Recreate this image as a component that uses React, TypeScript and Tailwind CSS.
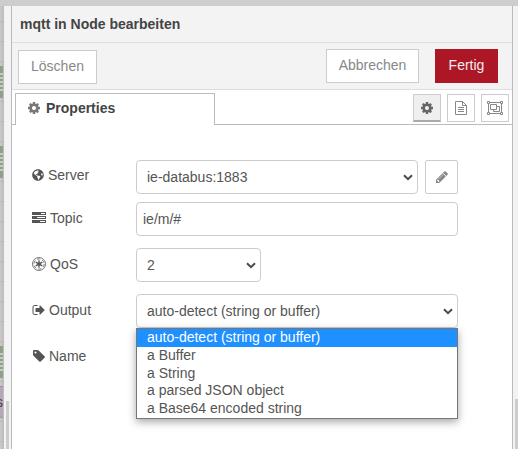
import React from "react";
import { FaGlobeAmericas } from "react-icons/fa";

type IconProps = { className?: string };

const glyphs = {
  cog: "M1152 896q0-106-75-181t-181-75-181 75-75 181 75 181 181 75 181-75 75-181zm512-109v222q0 12-8 23t-20 13l-185 28q-19 54-39 91 35 50 107 138 10 12 10 25t-9 23q-27 37-99 108t-94 71q-12 0-26-9l-138-108q-44 23-91 38-16 136-29 186-7 28-36 28h-222q-14 0-24.5-8.5t-11.5-21.5l-28-184q-49-16-90-37l-141 107q-10 9-25 9-14 0-25-11-126-114-165-168-7-10-7-23 0-12 8-23 15-21 51-66.5t54-70.5q-27-50-41-99l-183-27q-13-2-21-12.5t-8-23.5v-222q0-12 8-23t19-13l186-28q14-46 39-92-40-57-107-138-10-12-10-24 0-10 9-23 26-36 98.5-107.5t94.5-71.5q13 0 26 10l138 107q44-23 91-38 16-136 29-186 7-28 36-28h222q14 0 24.5 8.5t11.5 21.5l28 184q49 16 90 37l142-107q9-9 24-9 13 0 25 10 129 119 165 170 7 8 7 22 0 12-8 23-15 21-51 66.5t-54 70.5q26 50 41 98l183 28q13 2 21 12.5t8 23.5z",
  tag: "M576 448q0-53-37.5-90.5t-90.5-37.5-90.5 37.5-37.5 90.5 37.5 90.5 90.5 37.5 90.5-37.5 37.5-90.5zm1067 576q0 53-37 90l-491 492q-39 37-91 37-53 0-90-37l-715-716q-38-37-64.5-101t-26.5-117v-416q0-52 38-90t90-38h416q53 0 117 26.5t102 64.5l715 714q37 39 37 91z",
  signOut: "M704 1440q0 4 1 20t.5 26.5-3 23.5-10 19.5-20.5 6.5h-320q-119 0-203.5-84.5t-84.5-203.5v-704q0-119 84.5-203.5t203.5-84.5h320q13 0 22.5 9.5t9.5 22.5q0 4 1 20t.5 26.5-3 23.5-10 19.5-20.5 6.5h-320q-66 0-113 47t-47 113v704q0 66 47 113t113 47h312l11.5 1 11.5 3 8 5.5 7 9 2 13.5zm928-544q0 26-19 45l-544 544q-19 19-45 19t-45-19-19-45v-288h-448q-26 0-45-19t-19-45v-384q0-26 19-45t45-19h448v-288q0-26 19-45t45-19 45 19 19 45l544 544q19 19 19 45z",
  pencil: "M491 1536l91-91-235-235-91 91v107h128v128h107zm523-928q0-22-22-22-10 0-17 7l-542 542q-7 7-7 17 0 22 22 22 10 0 17-7l542-542q7-7 7-17zm-54-192l416 416-832 832h-416v-416zm683 96q0 53-37 90l-166 166-416-416 166-165q36-38 90-38 53 0 91 38l235 234q37 39 37 91z",
};

function Glyph({ name, className }: IconProps & { name: keyof typeof glyphs }) {
  return (
    <svg viewBox="0 0 1792 1792" fill="currentColor" className={className}>
      <path d={glyphs[name]} />
    </svg>
  );
}

function FileIcon({ className }: IconProps) {
  return (
    <svg viewBox="0 0 12 14" fill="none" stroke="currentColor" className={className}>
      <path d="M.5 .5H7.5L11.5 4.5V13.5H.5ZM7.5 .5V4.5H11.5M3 6.5H9M3 8.5H9M3 10.5H9" />
    </svg>
  );
}

function TasksIcon({ className }: IconProps) {
  return (
    <svg viewBox="0 0 14 12" className={className}>
      <path
        fill="currentColor"
        fillRule="evenodd"
        d="M0 0H14V3H0ZM9 1V2H13V1ZM0 4H14V7H0ZM5 5V6H13V5ZM0 8H14V11H0ZM8 9V10H13V9Z"
      />
    </svg>
  );
}

function EmpireIcon({ className }: IconProps) {
  return (
    <svg viewBox="0 0 14 14" fill="none" stroke="currentColor" className={className}>
      <circle cx="7" cy="7" r="6.5" strokeWidth=".8" />
      <circle cx="7" cy="7" r="5.1" strokeWidth="1" strokeDasharray="3.34 2" opacity=".75" />
      <path d="M7 3.2V10.8M3.7 5.1L10.3 8.9M3.7 8.9L10.3 5.1" strokeWidth="1.3" />
      <circle cx="7" cy="7" r="1.5" fill="currentColor" stroke="none" />
    </svg>
  );
}

function ObjectGroupIcon({ className }: IconProps) {
  return (
    <svg viewBox="0 0 16 14" fill="none" stroke="currentColor" className={className}>
      <path d="M3 1.5H13M3 12.5H13M1.5 3V11M14.5 3V11" />
      <path d="M.5 .5H2.5V2.5H.5ZM13.5 .5H15.5V2.5H13.5ZM.5 11.5H2.5V13.5H.5ZM13.5 11.5H15.5V13.5H13.5Z" />
      <path d="M3.5 3.5H9.5V8.5H3.5ZM9.5 5.5H12.5V10.5H6.5V8.5" />
    </svg>
  );
}

function Chevron() {
  return (
    <svg viewBox="0 0 10 7" fill="none" stroke="#4a4a4a" strokeWidth="2" className="h-[7px] w-[10px]">
      <path d="M1 1.2L5 5.2L9 1.2" />
    </svg>
  );
}

function SelectBox({ children, className }: { children: React.ReactNode; className: string }) {
  return (
    <div className={`flex h-[34px] items-center justify-between rounded-[4px] border border-[#ccc] bg-white pr-[4px] pl-[10px] ${className}`}>
      <span>{children}</span>
      <Chevron />
    </div>
  );
}

function Row({ icon, label, children, className = "", labelClass = "pb-[3px]" }: { icon: React.ReactNode; label: string; children?: React.ReactNode; className?: string; labelClass?: string }) {
  return (
    <div className={`flex h-[34px] ${className}`}>
      <div className={`flex w-[104px] items-center ${labelClass}`}>
        {icon}
        <span>{label}</span>
      </div>
      {children}
    </div>
  );
}

function CanvasNode() {
  return (
    <div className="flex h-[32px] w-[3px] flex-col justify-between bg-[#c4cbc1]">
      <i className="h-[7px] bg-[#8ea087]" />
      <i className="h-[2px] bg-[#8ea087]" />
      <i className="h-[2px] bg-[#8ea087]" />
      <i className="h-[2px] bg-[#8ea087]" />
      <i className="h-[2px] bg-[#8ea087]" />
      <i className="h-[7px] bg-[#8ea087]" />
    </div>
  );
}

const options = ["auto-detect (string or buffer)", "a Buffer", "a String", "a parsed JSON object", "a Base64 encoded string"];

export default function App() {
  return (
    <div className="flex h-[449px] w-[518px] flex-col overflow-hidden bg-[#cdcdcd] pt-[6px] font-['Liberation_Sans',Arial,sans-serif] text-[14px] leading-[20px] text-[#555]">
      <div className="flex flex-1">
        <div className="w-[4px] overflow-hidden bg-[repeating-linear-gradient(to_bottom,transparent_0px,transparent_15px,#b9b9b9_15px,#b9b9b9_16px,transparent_16px,transparent_20px),linear-gradient(to_right,#cbcac9,#bcbbba)]">
          <div className="h-[60px]" />
          <CanvasNode />
          <div className="h-[48px]" />
          <CanvasNode />
          <div className="h-[168px]" />
          <CanvasNode />
          <div className="mt-[8px] flex h-[32px] w-[3px] items-center justify-end border-y border-[#999] bg-[#b5a7b5] text-[#444]">s</div>
        </div>
        <div className="flex w-[7px] justify-center bg-[#f3f3f3] pt-[395px]">
          <div className="h-[50px] w-[3px] bg-[#cdcdcd]" />
        </div>
        <div className="w-[502px] border-x border-[#bbb] bg-white">
          <div className="flex h-[37px] items-center border-b border-[#ddd] bg-[#f3f3f3] pl-[8px] font-bold text-[#444]">mqtt in Node bearbeiten</div>
          <div className="flex h-[47px] items-start border-b border-[#ddd] bg-[#f3f3f3] pt-[6px] pr-[14px] pl-[6px] text-[#888]">
            <button className="mt-[1px] h-[34px] w-[79px] border border-[#ccc] bg-white pb-[2px]">Löschen</button>
            <button className="ml-auto h-[34px] w-[93px] border border-[#ccc] bg-white pb-[2px]">Abbrechen</button>
            <button className="ml-[16px] h-[34px] w-[63px] bg-[#ad1625] pb-[2px] text-[#eee]">Fertig</button>
          </div>
          <div className="flex h-[35px] items-end">
            <div className="h-px w-[3px] bg-[#bbb]" />
            <div className="flex h-[32px] w-[200px] items-center border border-b-0 border-[#bbb] pb-[3px] pl-[11px] font-bold text-[#444]">
              <Glyph name="cog" className="mr-[5px] h-[14px] w-[14px] text-[#777]" />
              Properties
            </div>
            <div className="flex h-[35px] flex-1 justify-end gap-[6px] border-b border-[#bbb] pt-[4px] pr-[3px] text-[#888]">
              <div className="flex h-[28px] w-[28px] items-center justify-center border border-b-2 border-[#ccc] border-b-[#aaa] bg-[#efefef] text-[#666]">
                <Glyph name="cog" className="h-[14px] w-[14px]" />
              </div>
              <div className="flex h-[28px] w-[28px] items-center justify-center border border-[#ccc]">
                <FileIcon className="h-[14px] w-[12px]" />
              </div>
              <div className="flex h-[28px] w-[28px] items-center justify-center border border-[#ccc]">
                <ObjectGroupIcon className="h-[14px] w-[16px]" />
              </div>
            </div>
          </div>
          <div className="flex flex-col pt-[35px] pl-[20px]">
            <Row label="Server" labelClass="pb-[4px]" icon={<FaGlobeAmericas className="mr-[4px] h-[12px] w-[12px]" />}>
              <SelectBox className="w-[282px]">ie-databus:1883</SelectBox>
              <button className="ml-[7px] flex h-[34px] w-[33px] items-center justify-center rounded-[2px] border border-[#ccc] pb-px text-[#888]">
                <Glyph name="pencil" className="h-[14px] w-[14px]" />
              </button>
            </Row>
            <Row className="mt-[8px]" label="Topic" icon={<TasksIcon className="mt-px mr-[4px] h-[12px] w-[14px]" />}>
              <div className="flex h-[34px] w-[322px] items-center rounded-[4px] border border-[#ccc] pl-[6px]">ie/m/#</div>
            </Row>
            <Row className="mt-[12px]" label="QoS" icon={<EmpireIcon className="mr-[4px] h-[14px] w-[14px]" />}>
              <SelectBox className="w-[125px]">2</SelectBox>
            </Row>
            <Row className="relative mt-[12px]" label="Output" icon={<Glyph name="signOut" className="mr-[3px] h-[14px] w-[14px]" />}>
              <SelectBox className="w-[322px]">auto-detect (string or buffer)</SelectBox>
              <div className="absolute top-[34px] left-[104px] h-[91px] w-[322px] border border-[#777] bg-white shadow-[0_3px_8px_rgba(0,0,0,0.35)]">
                {options.map((option, i) => (
                  <div key={option} className={`h-[17.8px] pl-[10px] leading-[16px] ${i === 0 ? "bg-[#1e90ff] text-white" : ""}`}>
                    {option}
                  </div>
                ))}
              </div>
            </Row>
            <Row className="mt-[12px]" label="Name" icon={<Glyph name="tag" className="mr-[3px] h-[14px] w-[14px]" />} />
          </div>
        </div>
        <div className="flex w-[5px] justify-end bg-[#f3f3f3] pt-[393px]">
          <div className="w-[3px] bg-[#cdcdcd]" />
        </div>
      </div>
    </div>
  );
}
